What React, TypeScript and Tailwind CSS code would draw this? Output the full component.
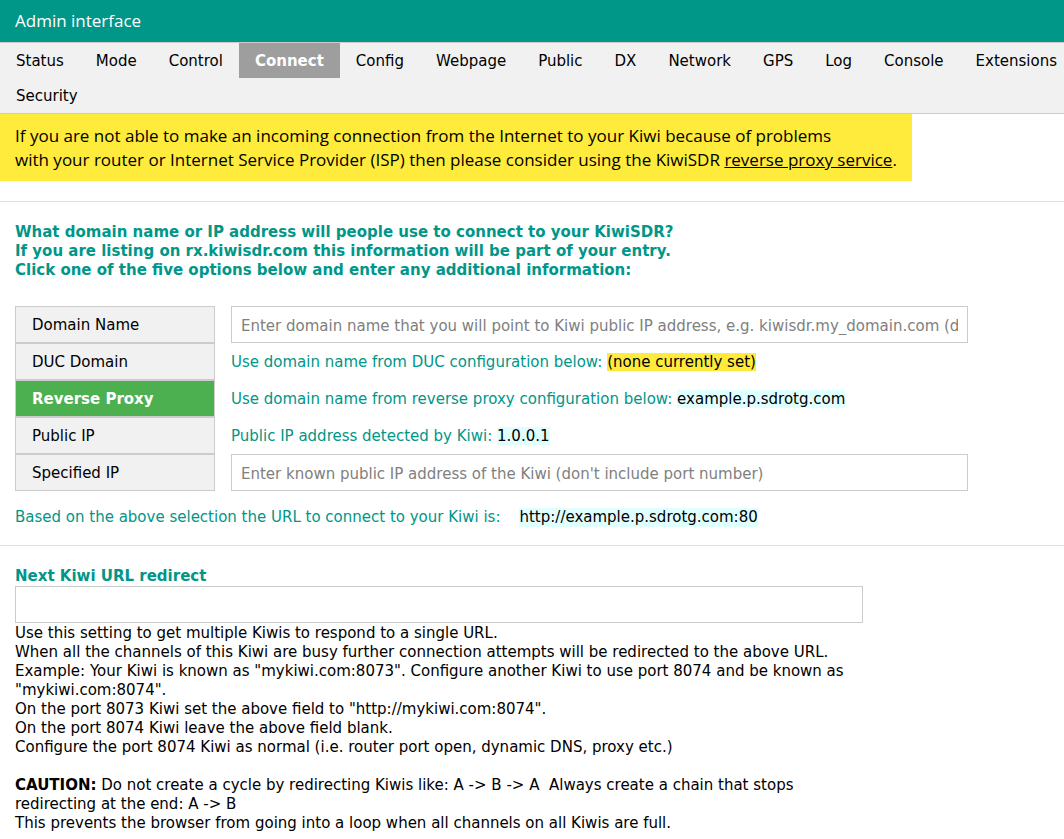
import { useState } from 'react'

const tabs = [
  'Status', 'Mode', 'Control', 'Connect', 'Config', 'Webpage', 'Public',
  'DX', 'Network', 'GPS', 'Log', 'Console', 'Extensions',
]

const options = ['Domain Name', 'DUC Domain', 'Reverse Proxy', 'Public IP', 'Specified IP']

const verdana = "font-['DejaVu_Sans',Verdana,sans-serif]"
const segoe = "font-['Open_Sans','Segoe_UI',Arial,sans-serif]"

function NavBar({ active }: { active: string }) {
  return (
    <div className="bg-[#f1f1f1] border-y border-[#ccc]">
      <div className="flex">
        {tabs.map((t) => (
          <div
            key={t}
            className={`px-4 pt-[9px] pb-[7px] leading-[19px] whitespace-nowrap ${
              t === active ? 'bg-[#9e9e9e] text-white font-bold' : 'text-black'
            }`}
          >
            {t}
          </div>
        ))}
      </div>
      <div className="flex">
        <div className="px-4 pt-[9px] pb-[7px] leading-[19px]">Security</div>
      </div>
    </div>
  )
}

function Hl({ children, yellow }: { children: string; yellow?: boolean }) {
  return (
    <span className={`text-black ${yellow ? 'bg-[#ffeb3b]' : 'bg-[#e0ffff]'}`}>{children}</span>
  )
}

function ConnectOptions() {
  const [sel, setSel] = useState(2)
  return (
    <div className="flex gap-4">
      <div className="w-[200px] flex flex-col">
        {options.map((o, i) => (
          <button
            key={o}
            onClick={() => setSel(i)}
            className={`text-left border border-[#ccc] px-4 pt-[9px] pb-[7px] leading-[19px] ${
              i === sel ? 'bg-[#4caf50] text-white font-bold' : 'bg-[#f1f1f1] text-black'
            }`}
          >
            {o}
          </button>
        ))}
      </div>
      <div className="w-[737px] flex flex-col text-[#009688]">
        <input
          className="h-[37px] border border-[#ccc] px-[9px] pt-[2px] outline-none placeholder:text-[#808080]"
          placeholder="Enter domain name that you will point to Kiwi public IP address, e.g. kiwisdr.my_domain.com (don't include port number)"
        />
        <div className="h-[37px] flex items-center pt-[2px]">
          <span>
            Use domain name from DUC configuration below: <Hl yellow>(none currently set)</Hl>
          </span>
        </div>
        <div className="h-[37px] flex items-center pt-[2px]">
          <span>
            Use domain name from reverse proxy configuration below: <Hl>example.p.sdrotg.com</Hl>
          </span>
        </div>
        <div className="h-[37px] flex items-center pt-[2px]">
          <span>
            Public IP address detected by Kiwi: <Hl>1.0.0.1</Hl>
          </span>
        </div>
        <input
          className="h-[37px] border border-[#ccc] px-[9px] pt-[2px] outline-none placeholder:text-[#808080]"
          placeholder="Enter known public IP address of the Kiwi (don't include port number)"
        />
      </div>
    </div>
  )
}

export default function App() {
  return (
    <div className={`${verdana} text-[15px] leading-[19px] text-black bg-white min-h-[839px] overflow-hidden`}>
      <div className={`${segoe} h-[42px] bg-[#009688] text-white text-[17px] flex items-center px-[15px] pb-[2px]`}>
        Admin interface
      </div>

      <NavBar active="Connect" />

      <div className={`${segoe} w-[912px] bg-[#ffeb3b] text-black text-[17px] leading-[24px] px-[15px] pt-[10px] pb-[9px]`}>
        If you are not able to make an incoming connection from the Internet to your Kiwi because of problems
        <br />
        with your router or Internet Service Provider (ISP) then please consider using the KiwiSDR{' '}
        <span className="underline">reverse proxy service</span>.
      </div>

      <hr className="mt-[20px] border-[#e0e0e0]" />

      <div className="px-[15px]">
        <div className="mt-[21px] font-bold text-[#009688]">
          What domain name or IP address will people use to connect to your KiwiSDR?
          <br />
          If you are listing on rx.kiwisdr.com this information will be part of your entry.
          <br />
          Click one of the five options below and enter any additional information:
        </div>

        <div className="mt-[26px]">
          <ConnectOptions />
        </div>

        <div className="mt-[17px] text-[#009688] flex gap-[19px]">
          <span>Based on the above selection the URL to connect to your Kiwi is:</span>
          <Hl>http://example.p.sdrotg.com:80</Hl>
        </div>
      </div>

      <hr className="mt-[18px] border-[#e0e0e0]" />

      <div className="px-[15px] pt-[21px]">
        <div className="font-bold text-[#009688]">Next Kiwi URL redirect</div>
        <input className="w-[848px] h-[37px] border border-[#ccc] px-[9px] outline-none block" />
        <div className="pt-[1px]">
          Use this setting to get multiple Kiwis to respond to a single URL.
          <br />
          When all the channels of this Kiwi are busy further connection attempts will be redirected to the above URL.
          <br />
          Example: Your Kiwi is known as "mykiwi.com:8073". Configure another Kiwi to use port 8074 and be known as
          <br />
          "mykiwi.com:8074".
          <br />
          On the port 8073 Kiwi set the above field to "http://mykiwi.com:8074".
          <br />
          On the port 8074 Kiwi leave the above field blank.
          <br />
          Configure the port 8074 Kiwi as normal (i.e. router port open, dynamic DNS, proxy etc.)
          <br />
          <br />
          <b>CAUTION:</b> Do not create a cycle by redirecting Kiwis like: A -&gt; B -&gt; A&nbsp; Always create a chain that stops
          <br />
          redirecting at the end: A -&gt; B
          <br />
          This prevents the browser from going into a loop when all channels on all Kiwis are full.
        </div>
      </div>
    </div>
  )
}
